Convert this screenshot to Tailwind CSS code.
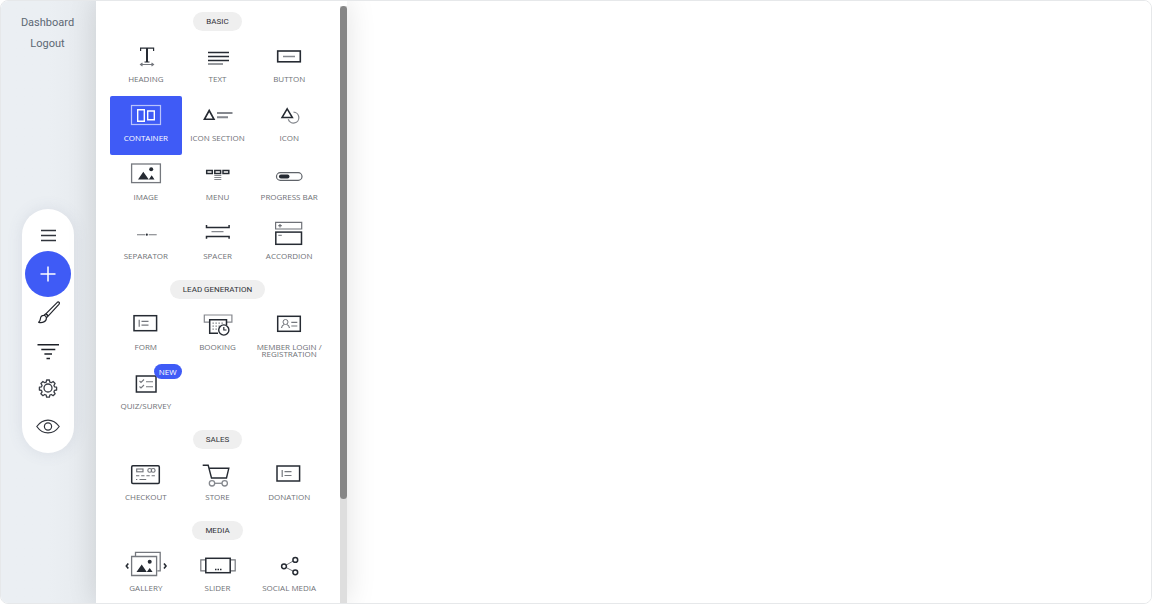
<!DOCTYPE html>
<html lang="en">
<head>
    <meta charset="UTF-8">
    <meta name="viewport" content="width=device-width, initial-scale=1.0">
    <title>Page Editor</title>
    <script src="https://cdn.jsdelivr.net/npm/@tailwindcss/browser@4"></script>
</head>
<body class="bg-white font-['Roboto',sans-serif]">
    <div class="flex h-screen overflow-hidden rounded-lg border border-[#e6e8ea]">

        <!-- Left bar -->
        <aside class="flex w-[95px] shrink-0 flex-col items-center bg-linear-to-r from-[#ebeff3] from-50% to-[#e6eaee] pt-[11px] pr-[2px] text-[11px] leading-[21px] text-[#5d6874]">
            <a href="#" class="hover:underline">Dashboard</a>
            <a href="#" class="hover:underline">Logout</a>

            <nav class="mt-auto mb-[150px] flex w-[52px] flex-col items-center rounded-full bg-white py-2 shadow-[0_0_16px_rgba(90,100,130,0.12)]">
                <button type="button" aria-label="Menu" class="flex h-[38px] w-full items-center justify-center">
                    <svg class="size-6" viewBox="0 0 24 24" fill="none" stroke="#30343c" stroke-width="1.6"><path d="M5 6.5h15M5 11.5h15M5 16.500h15"/></svg>
                </button>
                <button type="button" aria-label="Add element" class="-my-1 flex size-[46px] items-center justify-center rounded-full bg-[#3f5bf6]">
                    <svg class="size-6" viewBox="0 0 24 24" fill="none" stroke="#fff" stroke-width="1.5"><path d="M12 4.5v15M4.5 12h15"/></svg>
                </button>
                <button type="button" aria-label="Design" class="flex h-[38px] w-full items-center justify-center">
                    <svg class="size-6" viewBox="0 0 24 24" fill="none" stroke="#22252c" stroke-width="1.2" stroke-linejoin="round" stroke-linecap="round"><path d="M9.800 13.800 21.300 2.300c.8-.7 2.300-.2 2.100.9 0 .4-.2.700-.5 1.100L12.100 16.100zM9.800 13.800c1.200.3 2 1.100 2.300 2.300l-1.700 1.600c-.3-1.300-1.100-2-2.400-2.400zM8 15.300c-2.200-.1-3.400 1.400-3.600 3.400-.1 1.500-.7 2.700-1.700 3.600 3.400.7 7.900-.2 7.700-4.600"/></svg>
                </button>
                <button type="button" aria-label="Filter" class="flex h-[38px] w-full items-center justify-center">
                    <svg class="size-6" viewBox="0 0 24 24" fill="none" stroke="#1d2027" stroke-width="1.5"><path d="M1.500 6.700h21.500M5.300 11.400h14M8.400 16h7.600M10.500 20.500H14"/></svg>
                </button>
                <button type="button" aria-label="Settings" class="flex h-[38px] w-full items-center justify-center">
                    <svg class="size-6" viewBox="0 0 24 24" fill="none" stroke="#3a3e46" stroke-width="1.3" stroke-linejoin="round">
                        <circle cx="12" cy="12" r="4"/>
                        <path d="M10.600 4h2.800l.4 2.100 1.500.6 1.800-1.200 2 2-1.200 1.800.6 1.500 2.100.4v2.800l-2.100.4-.6 1.500 1.200 1.800-2 2-1.800-1.200-1.500.6-.4 2.100h-2.800l-.4-2.100-1.500-.6-1.800 1.200-2-2 1.200-1.800-.6-1.500-2.100-.4v-2.800l2.100-.4.600-1.500-1.200-1.800 2-2 1.800 1.200 1.500-.6z"/>
                    </svg>
                </button>
                <button type="button" aria-label="Preview" class="flex h-[38px] w-full items-center justify-center">
                    <svg class="size-6" viewBox="0 0 24 24" fill="none" stroke="#30343c" stroke-width="1.2"><path d="M.8 12.500c6-8.600 16.400-8.600 22.400 0-6 8.600-16.400 8.600-22.400 0z"/><circle cx="12" cy="12.500" r="3.600"/></svg>
                </button>
            </nav>
        </aside>

        <!-- Elements panel -->
        <section class="z-10 flex w-[251px] shrink-0 bg-white shadow-[0_0_28px_rgba(0,0,0,0.12)]">
            <div class="flex flex-1 flex-col gap-[7px] overflow-hidden pt-[11px] pr-[15px] pl-[14px] font-['Open_Sans',sans-serif] text-[8px] leading-[7px] text-[#6f7277]">

                <div class="flex flex-col items-center gap-[6px]">
                    <h2 class="rounded-full bg-[#efefef] px-[13px] font-['Roboto',sans-serif] text-[8px] leading-[19px] text-[#2f3237]">BASIC</h2>
                    <div class="grid w-full grid-cols-3">
                        <button type="button" class="flex h-[59px] flex-col items-center gap-[2px] pt-1">
                            <svg class="h-8 w-12 shrink-0" viewBox="0 0 48 32" fill="none" stroke="#262b33">
                                <path d="M18.600 10V7.200h13V10" stroke-width="1.200"/>
                                <path d="M25 7v14" stroke-width="2"/>
                                <path d="M22.500 21h5" stroke-width="1.200"/>
                                <path d="M19 23.500h12M20.500 22l-2 1.500 2 1.500M29.500 22l2 1.500-2 1.500" stroke="#75787e" stroke-width="1.100"/>
                            </svg>
                            <span>HEADING</span>
                        </button>
                        <button type="button" class="flex h-[59px] flex-col items-center gap-[2px] pt-1">
                            <svg class="h-8 w-12 shrink-0" viewBox="-1 0 48 32" fill="none" stroke="#262b33">
                                <path d="M14 11.500h21M14 15.500h21M14 19.500h21" stroke-width="1.700"/>
                                <path d="M14 23h15" stroke="#75787e" stroke-width="1.300"/>
                            </svg>
                            <span>TEXT</span>
                        </button>
                        <button type="button" class="flex h-[59px] flex-col items-center gap-[2px] pt-1">
                            <svg class="h-8 w-12 shrink-0" viewBox="0 0 48 32" fill="none" stroke="#262b33">
                                <rect x="12.700" y="10" width="22.600" height="10.800" stroke-width="1.600"/>
                                <path d="M18 15.500h12" stroke="#85888e" stroke-width="1.300"/>
                            </svg>
                            <span>BUTTON</span>
                        </button>
                        <button type="button" class="flex h-[59px] flex-col items-center gap-[2px] rounded-xs bg-[#3f5bf6] pt-1 text-white">
                            <svg class="h-8 w-12 shrink-0" viewBox="0 0 48 32" fill="none" stroke="#fff">
                                <rect x="9.500" y="5.500" width="29" height="19" stroke="#b9c3fc" stroke-width="1.200"/>
                                <path d="M15.700 9.700h6.600v11.600h-6.600zM25.700 11h6.600v8.800h-6.600z" stroke-width="1.400"/>
                            </svg>
                            <span>CONTAINER</span>
                        </button>
                        <button type="button" class="flex h-[59px] flex-col items-center gap-[2px] pt-1">
                            <svg class="h-8 w-12 shrink-0" viewBox="-1 0 48 32" fill="none" stroke="#262b33">
                                <path d="M15.200 10.500 20 19.300h-9.600z" stroke-width="1.600"/>
                                <path d="M23 13h15.500M23 17.300h11" stroke="#85888e" stroke-width="2"/>
                            </svg>
                            <span>ICON SECTION</span>
                        </button>
                        <button type="button" class="flex h-[59px] flex-col items-center gap-[2px] pt-1">
                            <svg class="h-8 w-12 shrink-0" viewBox="0 0 48 32" fill="none" stroke="#262b33">
                                <path d="M28.500 12.200a5.400 5.400 0 1 1-5.200 7" stroke="#85888e" stroke-width="1.300"/>
                                <path d="M22.200 8.800 27.400 17.500H17z" stroke-width="1.500"/>
                            </svg>
                            <span>ICON</span>
                        </button>
                        <button type="button" class="flex h-[59px] flex-col items-center gap-[2px] pt-1">
                            <svg class="h-8 w-12 shrink-0" viewBox="0 0 48 32" fill="none">
                                <rect x="9.600" y="5" width="28.800" height="18.600" stroke="#75787e" stroke-width="1.300"/>
                                <path d="M16 20.500 21.300 12.800 26.800 20.500zM26.800 20.500l2.900-4.200 2.800 4.200z" fill="#262b33"/>
                                <circle cx="29.200" cy="10.300" r="2" fill="#262b33"/>
                            </svg>
                            <span>IMAGE</span>
                        </button>
                        <button type="button" class="flex h-[59px] flex-col items-center gap-[2px] pt-1">
                            <svg class="h-8 w-12 shrink-0" viewBox="-1 0 48 32" fill="none" stroke="#262b33">
                                <path d="M12.700 11.600h5.600v3h-5.600zM20.800 11.600h5.800v3h-5.800zM29 11.600h5.800v3H29z" stroke-width="1.500"/>
                                <path d="M20.300 16.500h7M20.300 18.500h7M20.300 20.500h7" stroke="#85888e"/>
                            </svg>
                            <span>MENU</span>
                        </button>
                        <button type="button" class="flex h-[59px] flex-col items-center gap-[2px] pt-1">
                            <svg class="h-8 w-12 shrink-0" viewBox="0 0 48 32" fill="none">
                                <rect x="11.500" y="13.700" width="25.500" height="7.600" rx="3.800" stroke="#5f6369" stroke-width="1.200"/>
                                <rect x="14" y="15.600" width="10.500" height="3.900" rx="1.900" fill="#262b33"/>
                            </svg>
                            <span>PROGRESS BAR</span>
                        </button>
                        <button type="button" class="flex h-[59px] flex-col items-center gap-[2px] pt-1">
                            <svg class="h-8 w-12 shrink-0" viewBox="0 0 48 32" fill="none">
                                <path d="M15 16.700h8M26.700 16.700h8" stroke="#75787e" stroke-width="1.100"/>
                                <circle cx="24.800" cy="16.700" r="1.100" fill="#262b33"/>
                            </svg>
                            <span>SEPARATOR</span>
                        </button>
                        <button type="button" class="flex h-[59px] flex-col items-center gap-[2px] pt-1">
                            <svg class="h-8 w-12 shrink-0" viewBox="-1 0 48 32" fill="none" stroke="#262b33">
                                <path d="M12.500 7v2.400h22.600V7M12.500 20.800v-2.400h22.600v2.400" stroke-width="1.500"/>
                                <path d="M17.500 13.700h12" stroke="#85888e" stroke-width="1.300"/>
                            </svg>
                            <span>SPACER</span>
                        </button>
                        <button type="button" class="flex h-[59px] flex-col items-center gap-[2px] pt-1">
                            <svg class="h-8 w-12 shrink-0" viewBox="0 0 48 32" fill="none" stroke="#262b33">
                                <path d="M10.600 4.300h26.100v6.700H10.600zM13.300 7.700h3.500M15 6v3.400" stroke="#6f7278" stroke-width="1.200"/>
                                <path d="M13.300 17.300h3.500" stroke="#6f7278"/>
                                <rect x="10.800" y="14.100" width="25.700" height="12.200" stroke-width="1.500"/>
                            </svg>
                            <span>ACCORDION</span>
                        </button>
                    </div>
                </div>

                <div class="flex flex-col items-center gap-[6px]">
                    <h2 class="rounded-full bg-[#efefef] px-[13px] font-['Roboto',sans-serif] text-[8px] leading-[19px] text-[#2f3237]">LEAD GENERATION</h2>
                    <div class="grid w-full grid-cols-3">
                        <button type="button" class="flex h-[59px] flex-col items-center gap-[2px] pt-1">
                            <svg class="h-8 w-12 shrink-0" viewBox="0 0 48 32" fill="none" stroke="#262b33">
                                <rect x="12" y="6.700" width="22.600" height="15" stroke-width="1.500"/>
                                <path d="M17.200 10.700v7M19.500 12.300h7M19.500 16.200h7" stroke="#75787e" stroke-width="1.200"/>
                            </svg>
                            <span>FORM</span>
                        </button>
                        <button type="button" class="flex h-[59px] flex-col items-center gap-[2px] pt-1">
                            <svg class="h-8 w-12 shrink-0" viewBox="-1 0 48 32" fill="none" stroke="#262b33">
                                <path d="M15 13.200h-4.700V6h27.600v7.200H33" stroke="#85888e" stroke-width="1.200"/>
                                <path d="M24 24.300h-8.300V10.700h16.800v5.500" stroke-width="1.500"/>
                                <path d="M18.500 14.200h12M18.500 17.200h8M18.500 20.200h5" stroke="#75787e" stroke-width="1.300" stroke-dasharray="1.300 1.700"/>
                                <circle cx="29.800" cy="21" r="5.100" stroke-width="1.400"/>
                                <path d="M29.800 18v3h2.700" stroke-width="1.200"/>
                            </svg>
                            <span>BOOKING</span>
                        </button>
                        <button type="button" class="flex h-[59px] flex-col items-center gap-[2px] pt-1">
                            <svg class="h-8 w-12 shrink-0" viewBox="0 0 48 32" fill="none" stroke="#262b33">
                                <rect x="12.700" y="7.300" width="22.600" height="15" stroke-width="1.500"/>
                                <g stroke="#75787e"><circle cx="20.500" cy="13" r="2.500"/><path d="M16.500 19c.3-2 1.200-3 2.700-3.500M24.500 19c-.3-2-1.200-3-2.700-3.500M26.300 13.300h6M26.300 17h6" stroke-width="1.200"/></g>
                            </svg>
                            <span>MEMBER LOGIN / REGISTRATION</span>
                        </button>
                        <button type="button" class="relative flex h-[59px] flex-col items-center gap-[2px] pt-1">
                            <svg class="h-8 w-12 shrink-0" viewBox="0 0 48 32" fill="none" stroke="#262b33">
                                <rect x="14.400" y="8" width="19.600" height="16" stroke-width="1.500"/>
                                <path d="m17.500 13 1.500 1.500 3-3M17.500 18.500 19 20l3-3M24 13.700h7M24 18.700h7" stroke="#75787e" stroke-width="1.100"/>
                            </svg>
                            <span>QUIZ/SURVEY</span>
                            <span class="absolute top-0 right-0 rounded-full bg-[#3f5bf6] px-[5px] text-[8px] leading-[15px] text-white">NEW</span>
                        </button>
                    </div>
                </div>

                <div class="flex flex-col items-center gap-[6px]">
                    <h2 class="rounded-full bg-[#efefef] px-[13px] font-['Roboto',sans-serif] text-[8px] leading-[19px] text-[#2f3237]">SALES</h2>
                    <div class="grid w-full grid-cols-3">
                        <button type="button" class="flex h-[59px] flex-col items-center gap-[2px] pt-1">
                            <svg class="h-8 w-12 shrink-0" viewBox="0 0 48 32" fill="none" stroke="#262b33">
                                <rect x="9.700" y="6.700" width="27.600" height="17.800" rx="1.200" stroke-width="1.500"/>
                                <g stroke="#6f7278" stroke-width="1.100"><rect x="14.700" y="10" width="6.300" height="2.800"/><circle cx="27.700" cy="11.400" r="1.900"/><circle cx="31.200" cy="11.400" r="1.900"/><path d="M14 16.700h19" stroke-dasharray="3.300 1.900"/><path d="M14 20.500h1.300M17.500 20.500h6.700"/></g>
                            </svg>
                            <span>CHECKOUT</span>
                        </button>
                        <button type="button" class="flex h-[59px] flex-col items-center gap-[2px] pt-1">
                            <svg class="h-8 w-12 shrink-0" viewBox="-1 0 48 32" fill="none" stroke="#262b33">
                                <path d="M8.700 6.300h5.500L17.500 19h15l2.300-9.700H15.200" stroke-width="1.400"/>
                                <g stroke="#85888e" stroke-width="1.300"><circle cx="18" cy="24.300" r="2.700"/><circle cx="30.700" cy="24.300" r="2.700"/><path d="M20.700 24.300H28"/></g>
                            </svg>
                            <span>STORE</span>
                        </button>
                        <button type="button" class="flex h-[59px] flex-col items-center gap-[2px] pt-1">
                            <svg class="h-8 w-12 shrink-0" viewBox="0 0 48 32" fill="none" stroke="#262b33">
                                <rect x="12" y="7" width="22.600" height="15" stroke-width="1.500"/>
                                <path d="M17.200 11v7M19.500 12.600h7M19.500 16.500h7" stroke="#75787e" stroke-width="1.200"/>
                            </svg>
                            <span>DONATION</span>
                        </button>
                    </div>
                </div>

                <div class="flex flex-col items-center gap-[6px]">
                    <h2 class="rounded-full bg-[#efefef] px-[13px] font-['Roboto',sans-serif] text-[8px] leading-[19px] text-[#2f3237]">MEDIA</h2>
                    <div class="grid w-full grid-cols-3">
                        <button type="button" class="flex h-[59px] flex-col items-center gap-[2px] pt-1">
                            <svg class="h-8 w-12 shrink-0" viewBox="0 0 48 32" fill="none">
                                <path d="M13.500 6V2.300h24.700v18.500H35.500M9.600 6.500h25v19h-25z" stroke="#75787e" stroke-width="1.300"/>
                                <path d="M14.500 22 19.700 14.400 24.800 22zM24.800 22l2.900-4 2.900 4z" fill="#262b33"/>
                                <circle cx="27.700" cy="11.700" r="2" fill="#262b33"/>
                                <path d="M6.300 13.500 4.300 16l2 2.500M42 13.500l2 2.500-2 2.500" stroke="#262b33" stroke-width="1.600"/>
                            </svg>
                            <span>GALLERY</span>
                        </button>
                        <button type="button" class="flex h-[59px] flex-col items-center gap-[2px] pt-1">
                            <svg class="h-8 w-12 shrink-0" viewBox="-1 -1 48 32" fill="none" stroke="#262b33">
                                <path d="M11.500 8.900H6.800v11h4.700M36.500 8.900h4.700v11h-4.700" stroke="#75787e" stroke-width="1.200"/>
                                <rect x="11.800" y="7.300" width="24.400" height="14.400" stroke-width="1.500"/>
                                <path d="M21 18.500h1.500M23.500 18.500H25M26 18.500h1.500" stroke-width="1.500"/>
                            </svg>
                            <span>SLIDER</span>
                        </button>
                        <button type="button" class="flex h-[59px] flex-col items-center gap-[2px] pt-1">
                            <svg class="h-8 w-12 shrink-0" viewBox="0 -1 48 32" fill="none" stroke="#262b33">
                                <path d="m21.300 14 6.700-3.900M21.300 16.600l6.700 3.500" stroke="#75787e"/>
                                <g stroke-width="1.500"><circle cx="19" cy="15.300" r="2.400"/><circle cx="30.300" cy="8.900" r="2.400"/><circle cx="30.300" cy="21.300" r="2.400"/></g>
                            </svg>
                            <span>SOCIAL MEDIA</span>
                        </button>
                    </div>
                </div>
            </div>

            <!-- Scroll track -->
            <div class="w-[7px] shrink-0 bg-[#dedede] bg-clip-content pt-[5px]">
                <div class="h-[82.5%] rounded-full bg-[#868686]"></div>
            </div>
        </section>

        <main class="flex-1 bg-white"></main>
    </div>
</body>
</html>
